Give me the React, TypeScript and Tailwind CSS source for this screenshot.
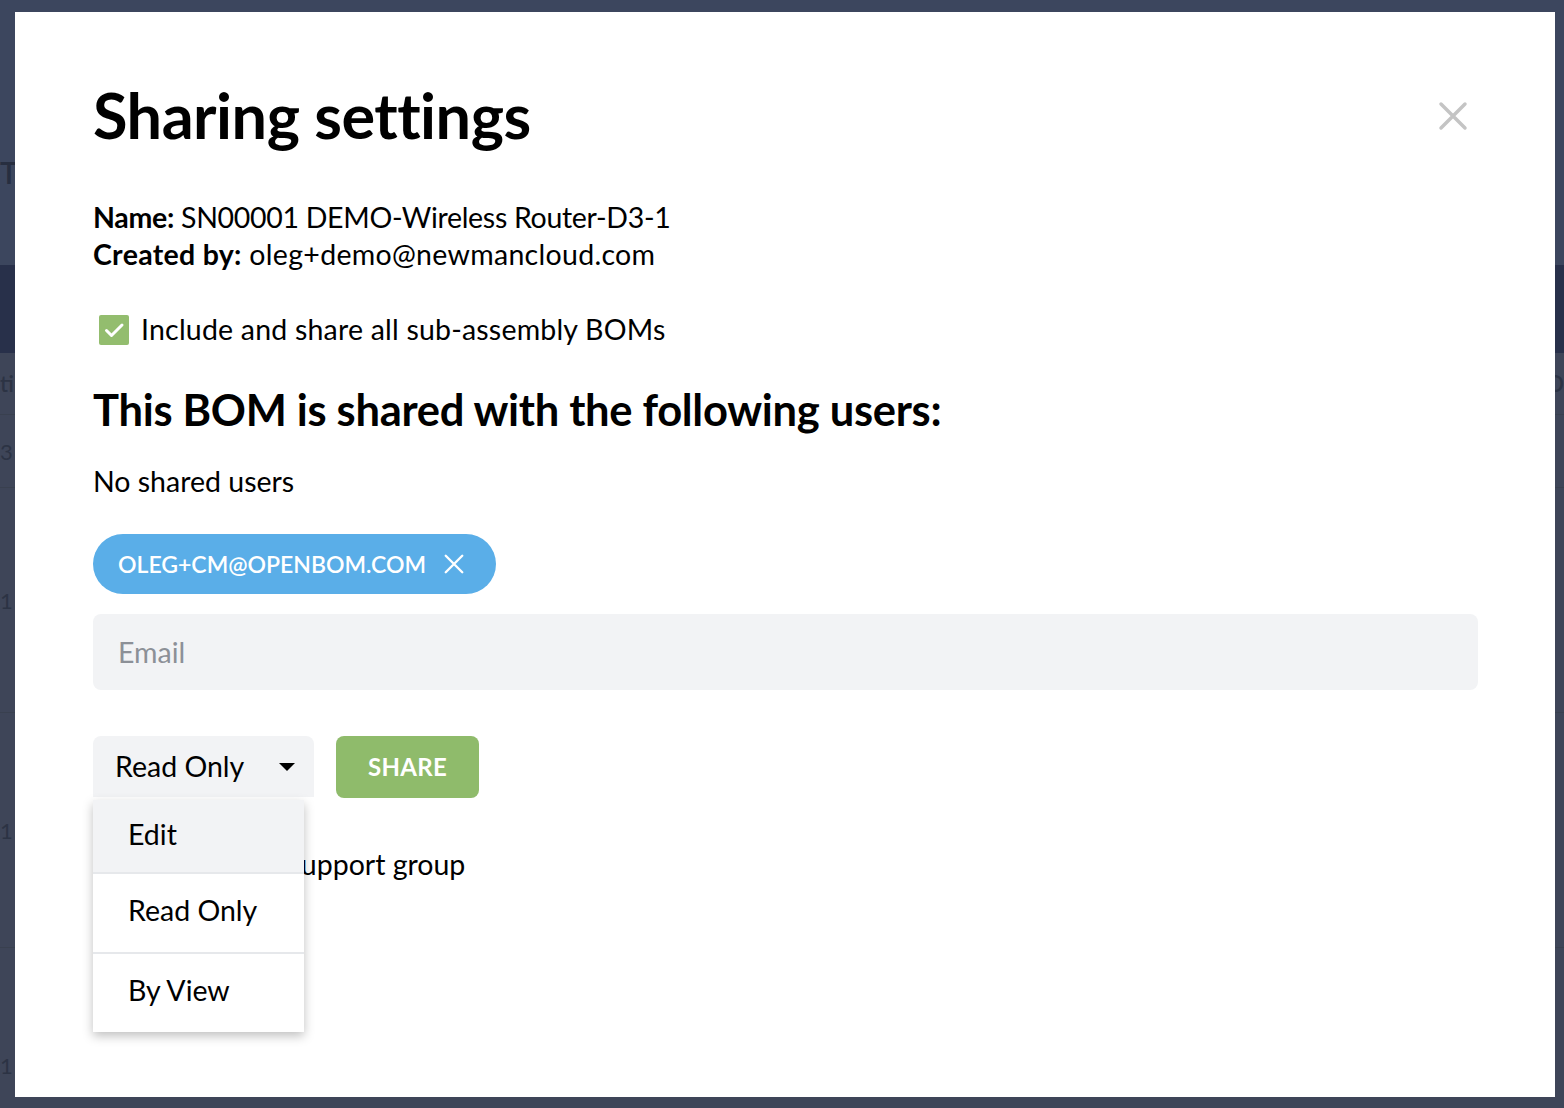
import React from 'react';

const font = { fontFamily: 'Lato, "Noto Sans", sans-serif' };

function CloseIcon({ className }: { className?: string }) {
  return (
    <svg viewBox="0 0 24 24" fill="none" stroke="currentColor" strokeWidth={2.6} strokeLinecap="round" className={className}>
      <path d="M3 3l18 18M21 3L3 21" />
    </svg>
  );
}

function Backdrop() {
  // the dimmed app sitting behind the dialog
  return (
    <div className="h-[1108px] bg-[#3e4558]">
      <div className="flex h-[265px] items-center bg-[#3c465e] pt-[80px]">
        <span className="text-[30px] font-semibold text-[#272e40]">Ti</span>
      </div>
      <div className="h-[88px] bg-[#28304a]" />
      <div className="text-[22px] text-[#2c3344]">
        <div className="flex h-[62px] items-center justify-between border-b border-[#39404f]">
          <span className="font-semibold">ti</span>
          <span className="font-semibold">D</span>
        </div>
        <div className="flex h-[73px] items-center border-b border-[#39404f]">3</div>
        <div className="flex h-[225px] items-center border-b border-[#39404f]">1</div>
        <div className="flex h-[235px] items-center border-b border-[#39404f]">1</div>
        <div className="flex h-[235px] items-center">1</div>
      </div>
    </div>
  );
}

export default function App() {
  return (
    <div className="relative h-[1108px] w-[1564px] overflow-hidden" style={font}>
      <Backdrop />

      <div className="absolute left-[15px] top-[12px] h-[1085px] w-[1540px] bg-white pl-[78px] pr-[77px] pt-[68px] text-black">
        <button className="absolute right-[86px] top-[88px] text-[#c4c4c4]">
          <CloseIcon className="h-[32px] w-[32px]" />
        </button>

        <h1 className="text-[63px] font-bold leading-[70px] tracking-[-0.5px]">Sharing settings</h1>

        <div className="mt-[49px] text-[28.5px] leading-[37px]">
          <p className="tracking-[-0.3px]">
            <span className="font-bold">Name:</span> SN00001 DEMO-Wireless Router-D3-1
          </p>
          <p className="tracking-[0.3px]">
            <span className="font-bold">Created by:</span> oleg+demo@newmancloud.com
          </p>
        </div>

        <label className="mt-[38px] flex items-center gap-[12px] pl-[6px] text-[28.5px] leading-[37px] tracking-[0.2px]">
          <span className="flex h-[30px] w-[30px] items-center justify-center rounded-[2px] bg-[#93bd6e]">
            <svg viewBox="0 0 24 24" fill="none" stroke="white" strokeWidth={3} strokeLinecap="round" strokeLinejoin="round" className="h-[24px] w-[24px]">
              <path d="M4.5 12.5l5 5L20 7" />
            </svg>
          </span>
          Include and share all sub-assembly BOMs
        </label>

        <h2 className="mt-[37px] text-[43.5px] font-bold leading-[48px] tracking-[-0.3px]">
          This BOM is shared with the following users:
        </h2>

        <p className="mt-[30px] text-[28.5px] leading-[37px]">No shared users</p>

        <div className="mt-[34px] flex">
          <span className="flex h-[60px] items-center gap-[17px] rounded-full bg-[#5aaee8] pl-[25px] pr-[31px] text-[23px] font-semibold text-white">
            OLEG+CM@OPENBOM.COM
            <CloseIcon className="h-[22px] w-[22px]" />
          </span>
        </div>

        <div className="mt-[20px] flex h-[76px] items-center rounded-[8px] bg-[#f2f3f5] pl-[25px] text-[28.5px] text-[#8c9097]">
          Email
        </div>

        <div className="relative mt-[46px] flex gap-[22px]">
          <div className="flex h-[61px] w-[221px] items-center justify-between rounded-t-[8px] bg-[#f2f3f5] pl-[22px] pr-[19px] text-[28.5px]">
            Read Only
            <span className="h-0 w-0 border-x-[8px] border-t-[8px] border-x-transparent border-t-black" />
          </div>
          <button className="flex h-[62px] w-[143px] items-center justify-center rounded-[8px] bg-[#8fbb6b] text-[24px] font-bold tracking-[0.3px] text-white">
            SHARE
          </button>

          <ul className="absolute left-0 top-[64px] z-10 flex w-[211px] flex-col bg-white text-[28.5px] shadow-[0_4px_10px_rgba(0,0,0,0.25)]">
            <li className="flex h-[72px] items-center bg-[#f2f3f5] pb-[4px] pl-[35px]">Edit</li>
            <li className="flex h-[80px] items-center border-t-[2px] border-[#e6e8eb] pb-[6px] pl-[35px]">Read Only</li>
            <li className="flex h-[80px] items-center border-t-[2px] border-[#e6e8eb] pb-[6px] pl-[35px]">By View</li>
          </ul>
        </div>

        <label className="mt-[48px] flex items-center gap-[20px] pl-[6px] text-[28.5px] leading-[37px]">
          <span className="h-[30px] w-[30px] rounded-[2px] border-2 border-[#c9ccd1]" />
          Share with support group
        </label>
      </div>
    </div>
  );
}
